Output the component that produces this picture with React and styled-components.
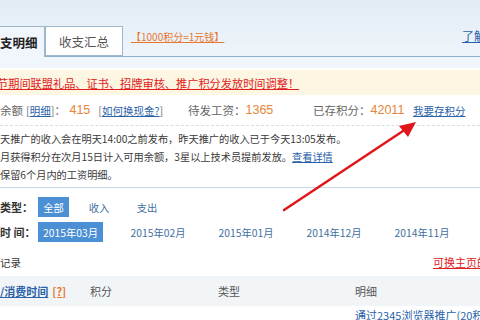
import styled, { createGlobalStyle } from 'styled-components';

const GlobalStyle = createGlobalStyle`
  html, body {
    margin: 0;
    padding: 0;
    background: #fff;
    overflow: hidden;
  }
  body {
    font-family: "Noto Sans CJK SC", "Liberation Sans", sans-serif;
    font-size: 12px;
    color: #333;
  }
`;

const Page = styled.div`
  position: relative;
  width: 480px;
  height: 320px;
  overflow: hidden;
`;

const TopBand = styled.div`
  height: 57px;
  background: linear-gradient(#e2ecf4, #eef5fb);
  border-bottom: 1px solid #8fb0c6;
  box-sizing: border-box;
  display: flex;
  align-items: flex-end;
`;

const Tab = styled.div`
  height: ${(p) => (p.$active ? 31 : 30)}px;
  margin-bottom: ${(p) => (p.$active ? -1 : 0)}px;
  box-sizing: border-box;
  display: flex;
  align-items: center;
  justify-content: ${(p) => (p.$active ? 'flex-start' : 'center')};
  width: ${(p) => p.$w}px;
  font-size: 12.5px;
  font-weight: ${(p) => (p.$active ? 700 : 400)};
  color: ${(p) => (p.$active ? '#222' : '#555')};
  background: ${(p) => (p.$active ? '#f0f6fb' : '#fff')};
  border: 1px solid #9db8cc;
  border-bottom: ${(p) => (p.$active ? 'none' : '1px solid #9db8cc')};
  border-left: ${(p) => (p.$active ? 'none' : '1px solid #9db8cc')};
  white-space: nowrap;
`;

const Exchange = styled.a`
  margin: 0 0 12px 8px;
  font-size: 10px;
  color: #e8762d;
  text-decoration: underline;
  white-space: nowrap;
`;

const Learn = styled.a`
  margin: 0 0 12px auto;
  font-size: 12px;
  color: #2a62a8;
  text-decoration: underline;
  white-space: nowrap;
  width: 18px;
  overflow: hidden;
`;

const SubBand = styled.div`
  height: 11px;
  background: #f0f6fb;
  border-bottom: 2px solid #fff;
`;

const Notice = styled.div`
  height: 25px;
  background: #fdf6e3;
  display: flex;
  align-items: center;
  overflow: hidden;
`;

const NoticeText = styled.a`
  margin-left: -3px;
  color: #e0201c;
  font-size: 11.2px;
  text-decoration: underline;
  white-space: nowrap;
`;

const BalanceRow = styled.div`
  height: 31px;
  display: flex;
  align-items: center;
  border-bottom: 1px dashed #dcdcdc;
  box-sizing: border-box;
  white-space: nowrap;
  color: #666;
  font-size: 11.5px;
`;

const Group = styled.div`
  display: flex;
  align-items: center;
  width: ${(p) => p.$w}px;
`;

const Num = styled.span`
  color: #e8853a;
  font-size: 12.5px;
  font-family: "Liberation Sans", sans-serif;
  margin-left: ${(p) => p.$ml || 0}px;
`;

const Bracket = styled.span`
  color: #777;
  margin-left: ${(p) => p.$ml || 0}px;
  font-size: 11px;
`;

const Link = styled.a`
  color: #2a62a8;
  text-decoration: underline;
  font-size: ${(p) => p.$fs || 10.5}px;
  margin-left: ${(p) => p.$ml || 0}px;
`;

const Notes = styled.div`
  padding: 4px 0 3px;
  border-bottom: 1px solid #c6d6e3;
`;

const NoteLine = styled.div`
  height: 18px;
  line-height: 18px;
  font-size: 10.2px;
  color: #3a3a3a;
  white-space: nowrap;
`;

const Filters = styled.div`
  padding-top: 9px;
  display: flex;
  flex-direction: column;
  gap: 5px;
`;

const FilterRow = styled.div`
  display: flex;
  align-items: center;
  height: 20px;
`;

const FilterLabel = styled.span`
  width: 38px;
  font-weight: 700;
  font-size: 11px;
  color: #333;
  white-space: nowrap;
`;

const Option = styled.span`
  width: ${(p) => p.$w}px;
  height: 20px;
  margin-right: ${(p) => p.$gap || 0}px;
  display: flex;
  align-items: center;
  justify-content: center;
  font-size: 10.3px;
  color: ${(p) => (p.$on ? '#fff' : '#3f6f9f')};
  background: ${(p) => (p.$on ? '#4b8fd4' : 'transparent')};
  white-space: nowrap;
`;

const RecordRow = styled.div`
  margin-top: 10px;
  height: 20px;
  display: flex;
  align-items: center;
  justify-content: space-between;
  font-size: 10.5px;
  white-space: nowrap;
`;

const RedLink = styled.a`
  color: #e0201c;
  text-decoration: underline;
  font-size: 11px;
  margin-right: -30px;
`;

const TableHead = styled.div`
  margin-top: 4px;
  height: 30px;
  background: #f2f5f8;
  display: grid;
  grid-template-columns: 90px 128px 137px 1fr;
  align-items: center;
  font-size: 11px;
  color: #555;
  white-space: nowrap;
`;

const HeadLink = styled.a`
  color: #2a62a8;
  font-weight: 700;
  text-decoration: underline;
`;

const Help = styled.span`
  color: #e8762d;
  font-weight: 700;
  margin-left: 4px;
  text-decoration: underline;
`;

const BodyRow = styled.div`
  display: grid;
  grid-template-columns: 355px 1fr;
  height: 18px;
  align-items: center;
  white-space: nowrap;
`;

const Arrow = styled.svg`
  position: absolute;
  left: 0;
  top: 0;
  pointer-events: none;
`;

const months = ['2015年02月', '2015年01月', '2014年12月', '2014年11月'];

export default function App() {
  return (
    <Page>
      <GlobalStyle />
      <TopBand>
        <Tab $active $w={45}>支明细</Tab>
        <Tab $w={78}>收支汇总</Tab>
        <Exchange>【1000积分=1元钱】</Exchange>
        <Learn>了解积分</Learn>
      </TopBand>
      <SubBand />
      <Notice>
        <NoticeText>节期间联盟礼品、证书、招牌审核、推广积分发放时间调整！</NoticeText>
      </Notice>
      <BalanceRow>
        <Group $w={188}>
          余额
          <Bracket $ml={3}>[</Bracket>
          <Link>明细</Link>
          <Bracket>]：</Bracket>
          <Num $ml={4}>415</Num>
          <Bracket $ml={8}>[</Bracket>
          <Link>如何换现金?</Link>
          <Bracket>]</Bracket>
        </Group>
        <Group $w={125}>
          待发工资：
          <Num>1365</Num>
        </Group>
        <Group $w={100}>
          已存积分：
          <Num>42011</Num>
        </Group>
        <Link $fs={10.5}>我要存积分</Link>
      </BalanceRow>
      <Notes>
        <NoteLine>天推广的收入会在明天14:00之前发布，昨天推广的收入已于今天13:05发布。</NoteLine>
        <NoteLine>
          月获得积分在次月15日计入可用余额，3星以上技术员提前发放。
          <Link $fs={10.2}>查看详情</Link>
        </NoteLine>
        <NoteLine>保留6个月内的工资明细。</NoteLine>
      </Notes>
      <Filters>
        <FilterRow>
          <FilterLabel>类型：</FilterLabel>
          <Option $on $w={31} $gap={17}>全部</Option>
          <Option $w={26} $gap={22}>收入</Option>
          <Option $w={26}>支出</Option>
        </FilterRow>
        <FilterRow>
          <FilterLabel>时 间：</FilterLabel>
          <Option $on $w={65} $gap={11}>2015年03月</Option>
          {months.map((m) => (
            <Option key={m} $w={88}>{m}</Option>
          ))}
        </FilterRow>
      </Filters>
      <RecordRow>
        <span>记录</span>
        <RedLink>可换主页的积分</RedLink>
      </RecordRow>
      <TableHead>
        <span>
          <HeadLink>/消费时间</HeadLink>
          <Help>[?]</Help>
        </span>
        <span>积分</span>
        <span>类型</span>
        <span>明细</span>
      </TableHead>
      <BodyRow>
        <span />
        <Link $fs={11}>通过2345浏览器推广(20积分)</Link>
      </BodyRow>
      <Arrow width="480" height="320" viewBox="0 0 480 320">
        <line x1="284" y1="210" x2="406" y2="129" stroke="#e0161a" strokeWidth="2.5" strokeLinecap="round" />
        <polygon points="416,122 399,126 408,137" fill="#e0161a" />
      </Arrow>
    </Page>
  );
}
